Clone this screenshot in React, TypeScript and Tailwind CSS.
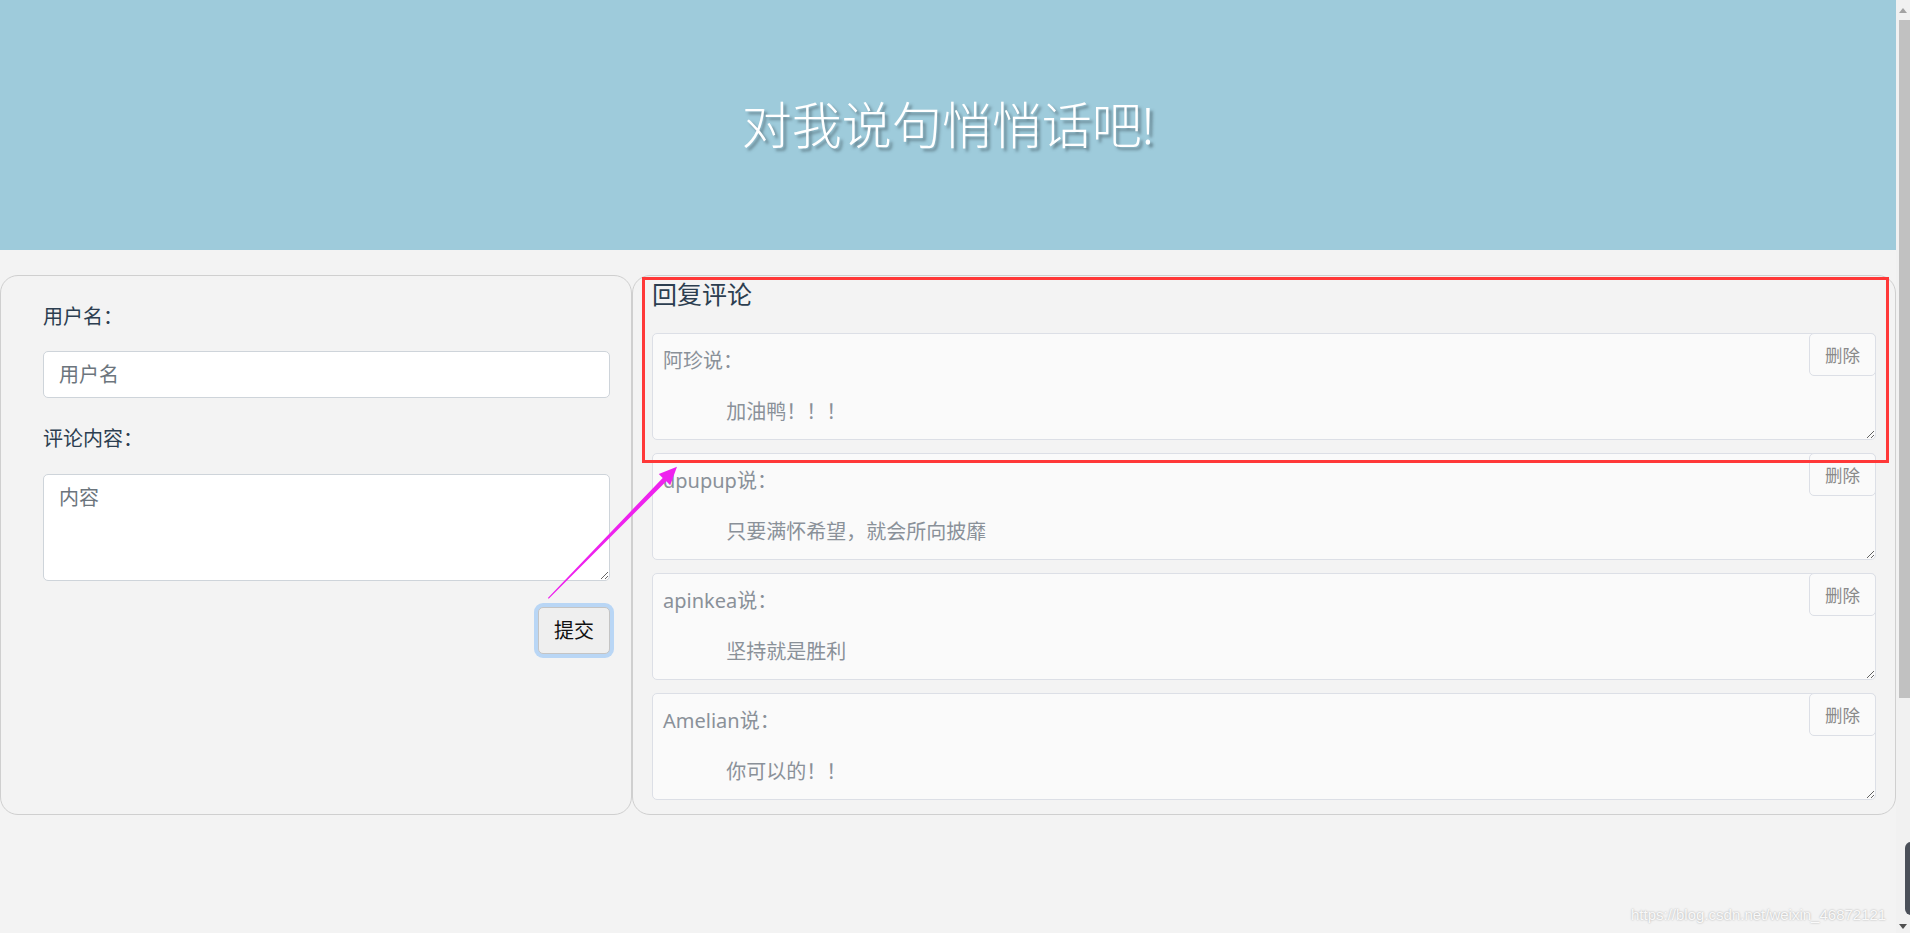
import React from 'react';

const comments = [
  { name: '阿珍', text: '加油鸭！！！' },
  { name: 'dpupup', text: '只要满怀希望，就会所向披靡' },
  { name: 'apinkea', text: '坚持就是胜利' },
  { name: 'Amelian', text: '你可以的！！' },
];

const App = () => {
  return (
    <div className="relative flex h-screen w-full overflow-hidden bg-[#f3f3f3] font-['Noto_Sans','Noto_Sans_CJK_SC',sans-serif] text-[#2c3e50] antialiased">
      <div className="min-w-0 flex-1">
        {/* Header */}
        <header className="flex h-[250px] items-center justify-center bg-[#9ecbdb]">
          <h1 className="text-[50px] font-light leading-[60px] text-white [text-shadow:3px_3px_3px_rgba(60,80,90,0.55)]">
            对我说句悄悄话吧!
          </h1>
        </header>

        <div className="mt-[25px] flex items-stretch">
          {/* Form */}
          <section className="w-[632px] shrink-0 rounded-[18px] border border-[#cfcfcf] pl-[42px] pr-[21px] pt-[26px]">
            <label className="block text-[20px] leading-[30px]">用户名：</label>
            <input
              className="mt-[19px] block h-[47px] w-full rounded-[5px] border border-[#ced4da] bg-white px-[15px] text-[20px] leading-[30px] text-[#495057] outline-none placeholder:text-[#6c757d]"
              placeholder="用户名"
            />
            <label className="mt-[26px] block text-[20px] leading-[30px]">评论内容：</label>
            <textarea
              rows={3}
              className="mt-[20px] block h-[107px] w-full rounded-[5px] border border-[#ced4da] bg-white px-[15px] py-[7.5px] text-[20px] leading-[30px] text-[#495057] outline-none placeholder:text-[#6c757d]"
              placeholder="内容"
            />
            <div className="mt-[26px] flex justify-end">
              <button className="h-[47px] rounded-[5px] border border-[#c4c4c4] bg-[#efefef] px-[15px] text-[20px] leading-[30px] text-[#111] shadow-[0_0_0_4px_#b9d6f5]">
                提交
              </button>
            </div>
          </section>

          {/* Comments */}
          <section className="flex-1 rounded-[18px] border border-[#cfcfcf] px-[19px] pb-[14px] pt-[3px]">
            <h5 className="text-[25px] leading-[30px]">回复评论</h5>
            <div className="mt-[24px] flex flex-col gap-[13px]">
              {comments.map((c) => (
                <div key={c.name} className="relative">
                  <textarea
                    readOnly
                    rows={3}
                    value={`${c.name}说：\n\n\u3000\u3000\u3000\u2009${c.text}`}
                    className="block h-[107px] w-full rounded-[5px] border border-[#dcdfe6] bg-[#fafafa] px-[10px] py-[14px] text-[20px] leading-[25.5px] text-[#8a9199] outline-none"
                  />
                  <button className="absolute right-0 top-0 h-[43px] rounded-[5px] border border-[#dcdfe6] bg-[#fafafa] px-[15px] text-[17.5px] leading-[26px] text-[#8a8a8a]">
                    删除
                  </button>
                </div>
              ))}
            </div>
          </section>
        </div>
      </div>

      {/* Fake browser scrollbar */}
      <div className="flex w-[14px] shrink-0 flex-col bg-[#f1f1f1]">
        <div className="flex h-[20px] items-center justify-center">
          <div className="h-0 w-0 border-x-[4px] border-b-[5px] border-x-transparent border-b-[#a3a3a3]" />
        </div>
        <div className="ml-[3px] h-[678px] w-[11px] bg-[#c1c1c1]" />
        <div className="flex-1" />
        <div className="flex h-[14px] items-center justify-center">
          <div className="h-0 w-0 border-x-[4px] border-t-[5px] border-x-transparent border-t-[#505050]" />
        </div>
      </div>

      {/* Annotation: red box */}
      <div className="pointer-events-none absolute left-[642px] top-[277px] h-[186px] w-[1247px] border-[3px] border-[#ff3838]" />

      {/* Annotation: magenta arrow */}
      <svg
        className="pointer-events-none absolute left-[540px] top-[455px]"
        width="150"
        height="150"
        viewBox="540 455 150 150"
      >
        <polygon
          fill="#ee22ee"
          points="547.9,597.9 662.7,477.9 658.8,474.0 677,466.7 670.2,485.2 666.3,481.3 548.7,598.7"
        />
      </svg>

      {/* side widget */}
      <div className="absolute left-[1905px] top-[842px] h-[73px] w-[8px] rounded-l-[6px] bg-[#4b5059]" />

      {/* watermark */}
      <div className="pointer-events-none absolute left-[1631px] top-[905px] font-['Liberation_Sans',sans-serif] text-[15px] leading-[20px] text-white/90 [text-shadow:0_0_2px_rgba(0,0,0,0.35)]">
        https://blog.csdn.net/weixin_46872121
      </div>
    </div>
  );
};

export default App;
